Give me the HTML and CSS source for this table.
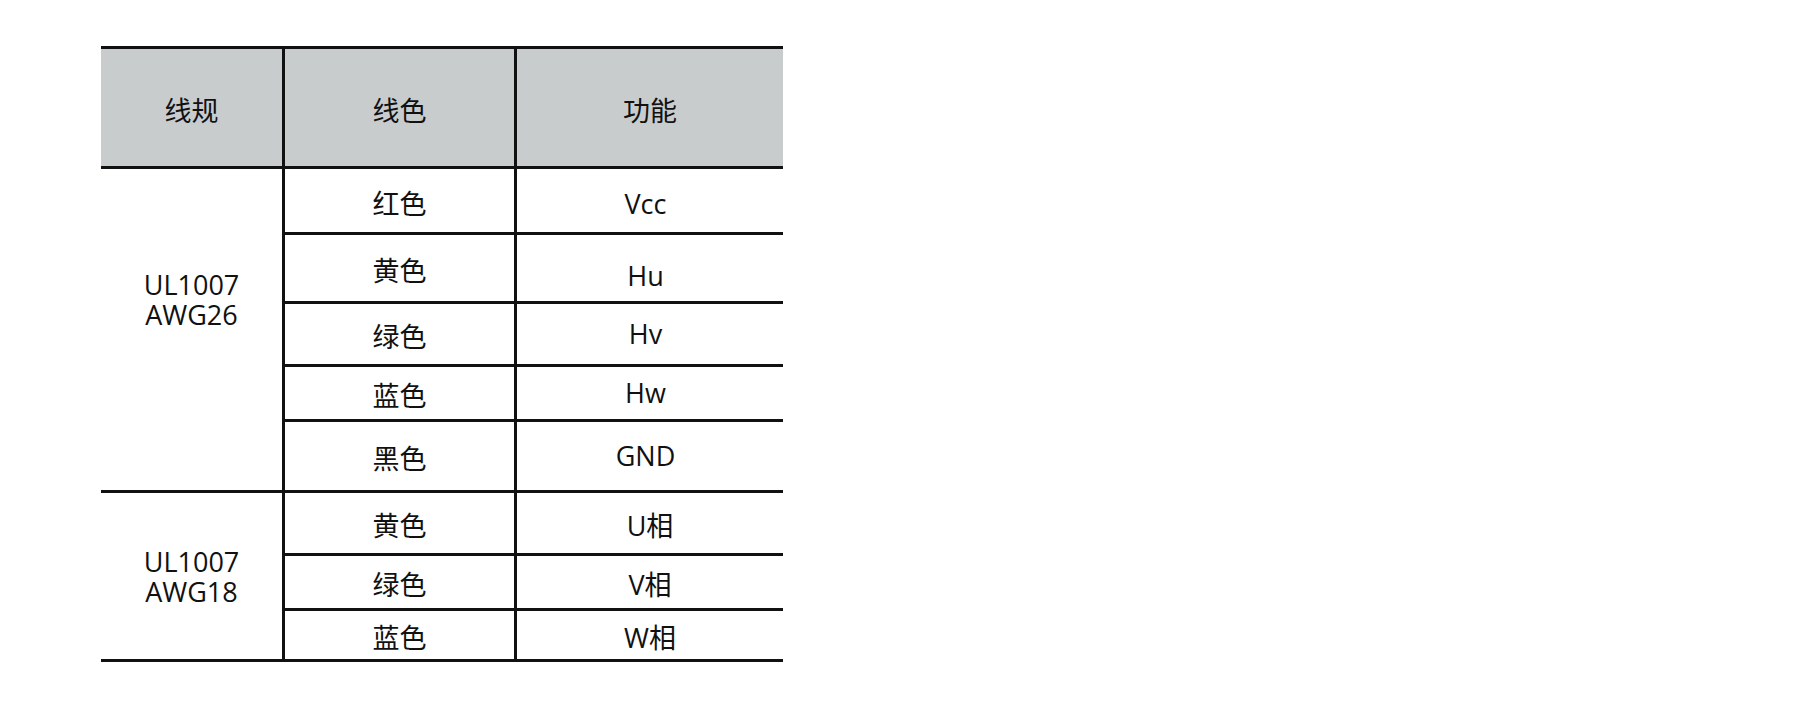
FILE: index.html
```html
<!DOCTYPE html>
<html lang="zh-CN">
<head>
<meta charset="utf-8">
<title>线规表</title>
<link rel="stylesheet" href="styles.css">
</head>
<body>
<div class="wire-table">
  <div class="cell head">线规</div>
  <div class="cell head col2">线色</div>
  <div class="cell head col3">功能</div>

  <div class="cell group g1"><span>UL1007<br>AWG26</span></div>
  <div class="cell col2">红色</div>
  <div class="cell col3 lat first">Vcc</div>
  <div class="cell col2">黄色</div>
  <div class="cell col3 lat low">Hu</div>
  <div class="cell col2">绿色</div>
  <div class="cell col3 lat">Hv</div>
  <div class="cell col2">蓝色</div>
  <div class="cell col3 lat">Hw</div>
  <div class="cell col2">黑色</div>
  <div class="cell col3 lat">GND</div>

  <div class="cell group g2"><span>UL1007<br>AWG18</span></div>
  <div class="cell col2">黄色</div>
  <div class="cell col3">U相</div>
  <div class="cell col2">绿色</div>
  <div class="cell col3">V相</div>
  <div class="cell col2">蓝色</div>
  <div class="cell col3">W相</div>
</div>
</body>
</html>
```

FILE: styles.css
```css
html, body {
  margin: 0;
  padding: 0;
  background: #ffffff;
}

body {
  font-family: "Open Sans", "Noto Sans CJK SC", sans-serif;
  font-size: 27px;
  color: #111111;
}

.wire-table {
  margin: 46px 0 0 101px;
  width: 682px;
  display: grid;
  grid-template-columns: 181px 232px 269px;
  grid-template-rows: 123px 66px 69px 63px 55px 71px 63px 55px 51px;
}

.cell {
  box-sizing: border-box;
  border-bottom: 3px solid #111;
  display: flex;
  align-items: center;
  justify-content: center;
  text-align: center;
  line-height: 30px;
  padding-top: 6px;
}

.head {
  background: #c9cccd;
  border-top: 3px solid #111;
}

.col2,
.col3 {
  border-left: 3px solid #111;
}

.lat {
  padding-top: 0;
  padding-right: 9px;
}

.lat.first {
  padding-top: 6px;
}

.group {
  grid-column: 1;
}

.g1 {
  grid-row: 2 / 7;
  padding-top: 0;
  padding-bottom: 60px;
}

.g2 {
  grid-row: 7 / 10;
  padding-top: 2px;
}

.lat.low {
  padding-top: 15px;
}
```
